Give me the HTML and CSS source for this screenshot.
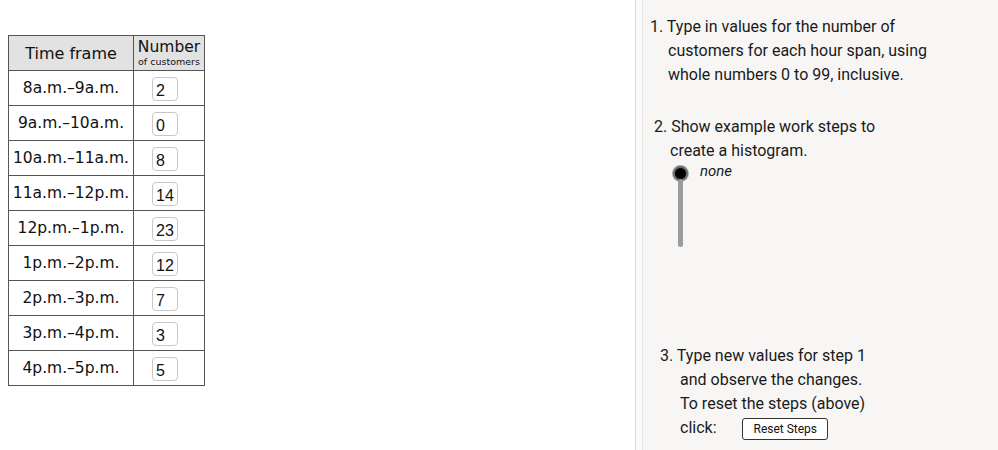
FILE: index.html
```html
<!DOCTYPE html>
<html>
<head>
<meta charset="utf-8">
<link rel="stylesheet" href="styles.css">
</head>
<body>
<div class="page">
  <section class="left">
    <table class="tbl">
      <thead>
        <tr>
          <th class="c1">Time frame</th>
          <th class="c2"><div class="num">Number</div><div class="of">of customers</div></th>
        </tr>
      </thead>
      <tbody>
        <tr><td class="c1">8a.m.–9a.m.</td><td class="c2"><span class="inp">2</span></td></tr>
        <tr><td class="c1">9a.m.–10a.m.</td><td class="c2"><span class="inp">0</span></td></tr>
        <tr><td class="c1">10a.m.–11a.m.</td><td class="c2"><span class="inp">8</span></td></tr>
        <tr><td class="c1">11a.m.–12p.m.</td><td class="c2"><span class="inp">14</span></td></tr>
        <tr><td class="c1">12p.m.–1p.m.</td><td class="c2"><span class="inp">23</span></td></tr>
        <tr><td class="c1">1p.m.–2p.m.</td><td class="c2"><span class="inp">12</span></td></tr>
        <tr><td class="c1">2p.m.–3p.m.</td><td class="c2"><span class="inp">7</span></td></tr>
        <tr><td class="c1">3p.m.–4p.m.</td><td class="c2"><span class="inp">3</span></td></tr>
        <tr><td class="c1">4p.m.–5p.m.</td><td class="c2"><span class="inp">5</span></td></tr>
      </tbody>
    </table>
  </section>
  <aside class="panel">
    <div class="inner">
      <p class="step s1">1. Type in values for the number of<br>customers for each hour span, using<br>whole numbers 0 to 99, inclusive.</p>
      <p class="step s2">2. Show example work steps to<br>create a histogram.</p>
      <div class="slider">
        <div class="rail">
          <span class="knob"></span>
          <span class="track"></span>
        </div>
        <span class="label">none</span>
      </div>
      <p class="step s3">3. Type new values for step 1<br>and observe the changes.<br>To reset the steps (above)<br>click: <button class="btn">Reset Steps</button></p>
    </div>
  </aside>
</div>
</body>
</html>
```
FILE: styles.css
```css
html, body {
  margin: 0;
  padding: 0;
  background: #ffffff;
}
.page {
  display: flex;
  width: 998px;
  height: 450px;
  overflow: hidden;
}
.left {
  flex: 1;
  padding: 35px 0 0 8px;
}
.tbl {
  border-collapse: collapse;
  font-family: "DejaVu Sans", sans-serif;
  color: #111;
}
.tbl th, .tbl td {
  border: 1px solid #555;
  padding: 0;
  height: 35px;
  box-sizing: border-box;
}
.tbl th {
  background: #e2e2e2;
  font-weight: normal;
}
.tbl .c1 {
  width: 125px;
  text-align: center;
  font-size: 15.5px;
}
.tbl th.c1 {
  font-size: 16px;
}
.tbl .c2 {
  width: 71px;
}
.num {
  font-size: 15.5px;
  line-height: 17px;
  text-align: center;
}
.of {
  font-size: 9.5px;
  line-height: 11px;
  text-align: center;
}
.tbl td.c2 {
  padding-left: 18px;
  padding-top: 2px;
}
.inp {
  display: flex;
  align-items: flex-end;
  width: 26px;
  height: 24px;
  box-sizing: border-box;
  border: 1px solid #c8c8c8;
  border-radius: 4px;
  padding: 0 0 0 3px;
  font-family: "Liberation Sans", sans-serif;
  font-size: 16px;
  line-height: 18px;
  color: #111;
  background: #fff;
}
.panel {
  width: 363px;
  flex: none;
  height: 450px;
  box-sizing: border-box;
  border-left: 1px solid #dcdcdc;
  padding-left: 6px;
  background: #fbfbfb;
}
.inner {
  height: 100%;
  border-left: 1px solid #e6e6e6;
  background: #f7f6f5;
  font-family: Roboto, sans-serif;
  font-size: 16px;
  color: #1a1a1a;
  padding-top: 15px;
  box-sizing: border-box;
}
.step {
  margin: 0;
  line-height: 24px;
}
.s1 {
  padding-left: 25px;
  text-indent: -18px;
}
.s2 {
  margin-top: 28px;
  padding-left: 27px;
  text-indent: -16px;
}
.slider {
  display: flex;
  align-items: flex-start;
  margin: 3px 0 0 29px;
  gap: 12px;
}
.rail {
  display: flex;
  flex-direction: column;
  align-items: center;
  width: 16px;
}
.knob {
  width: 11px;
  height: 11px;
  border-radius: 50%;
  background: #000;
  border: 2px solid #6a6a6a;
  box-shadow: 0 0 0 1px #a8a8a8;
}
.track {
  width: 5px;
  height: 68px;
  margin-top: -2px;
  background: #9b9b9b;
  border-radius: 3px;
}
.label {
  font-style: italic;
  font-size: 15px;
  line-height: 18px;
  margin-top: -4px;
}
.s3 {
  margin-top: 97px;
  padding-left: 37px;
  text-indent: -20px;
}
.btn {
  margin-left: 22px;
  font-family: Roboto, sans-serif;
  font-size: 12px;
  padding: 0 10px;
  height: 22px;
  text-indent: 0;
  background: #fff;
  border: 1px solid #333;
  border-radius: 3px;
  color: #111;
  vertical-align: middle;
}
```
